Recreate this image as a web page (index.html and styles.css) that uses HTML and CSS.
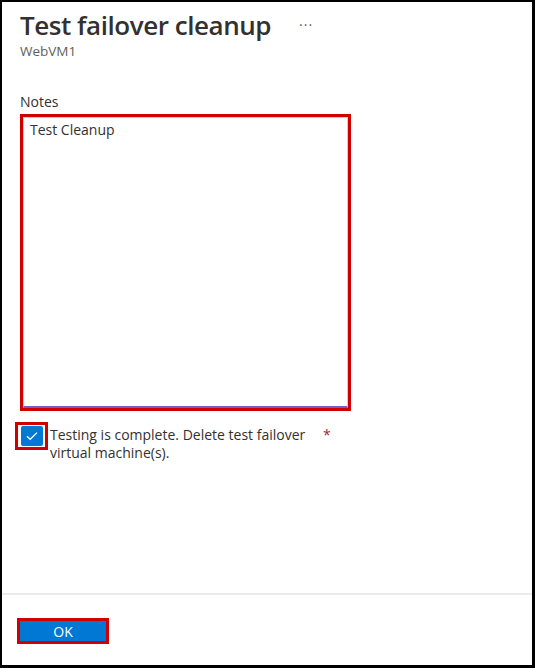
FILE: index.html
```html
<!DOCTYPE html>
<html lang="en">
<head>
<meta charset="utf-8">
<title>Test failover cleanup</title>
<link rel="stylesheet" href="styles.css">
</head>
<body>
<div class="panel">
  <header class="header">
    <div class="title-row">
      <h1 class="title">Test failover cleanup</h1>
      <span class="more">···</span>
    </div>
    <div class="subtitle">WebVM1</div>
  </header>
  <main class="content">
    <label class="field-label">Notes</label>
    <div class="highlight notes-hl">
      <div class="textarea">Test Cleanup</div>
    </div>
    <div class="check-row">
      <div class="highlight check-hl">
        <span class="checkbox">
          <svg width="12" height="10" viewBox="0 0 12 10"><path d="M1 5.2 L4.2 8.3 L11 1.6" fill="none" stroke="#fff" stroke-width="1.3"/></svg>
        </span>
      </div>
      <div class="check-text">Testing is complete. Delete test failover virtual machine(s).</div>
      <span class="required">*</span>
    </div>
  </main>
  <footer class="footer">
    <div class="highlight ok-hl">
      <button class="btn-ok">OK</button>
    </div>
  </footer>
</div>
</body>
</html>
```

FILE: styles.css
```css
* { box-sizing: border-box; }
html, body { margin: 0; padding: 0; background: #fff; }
body {
  font-family: "Open Sans", "Noto Sans", sans-serif;
  color: #323130;
}
.panel {
  width: 535px;
  height: 668px;
  border-style: solid;
  border-color: #000;
  border-width: 2px 3px 3px 2px;
  display: flex;
  flex-direction: column;
}
.header { padding: 6px 0 0 18px; }
.title-row { display: flex; align-items: center; height: 34px; }
.title {
  margin: 0;
  font-size: 26px;
  font-weight: 600;
  line-height: 34px;
  color: #323130;
  letter-spacing: -0.45px;
}
.more {
  margin-left: 28px;
  font-size: 14px;
  line-height: 18px;
  color: #605e5c;
  letter-spacing: 1px;
}
.subtitle {
  font-size: 13.5px;
  line-height: 16px;
  color: #605e5c;
  margin-top: 1px;
}
.content { padding: 34px 0 0 13px; flex: 1; }
.field-label {
  display: block;
  margin-left: 5px;
  font-size: 14px;
  line-height: 18px;
  color: #323130;
}
.highlight { border: 3px solid #d00000; }
.notes-hl {
  width: 331px;
  height: 297px;
  margin-left: 5px;
  margin-top: 3px;
}
.textarea {
  height: 100%;
  border: 1px solid #d9c6ee;
  border-bottom: 2px solid #7b5cc7;
  padding: 3px 6px;
  font-size: 14px;
  line-height: 18px;
  color: #323130;
}
.check-row {
  display: flex;
  align-items: flex-start;
  margin-top: 11px;
}
.check-hl {
  width: 33px;
  height: 28px;
  display: flex;
  align-items: center;
  justify-content: center;
  flex: none;
}
.checkbox {
  width: 22px;
  height: 20px;
  border-radius: 2px;
  background: #0078d4;
  display: flex;
  align-items: center;
  justify-content: center;
}
.check-text {
  width: 262px;
  margin-left: 2px;
  margin-top: 4px;
  font-size: 14px;
  line-height: 18px;
  color: #323130;
}
.required {
  margin-left: 11px;
  margin-top: 4px;
  color: #a4262c;
  font-size: 14px;
  line-height: 18px;
}
.footer {
  border-top: 2px solid #edebe9;
  padding: 23px 0 21px 15px;
}
.ok-hl { width: 92px; height: 26px; }
.btn-ok {
  display: block;
  width: 100%;
  height: 100%;
  border: none;
  margin: 0;
  background: #0078d4;
  color: #fff;
  font-family: "Open Sans", "Noto Sans", sans-serif;
  font-size: 14px;
  padding: 0;
}
```
